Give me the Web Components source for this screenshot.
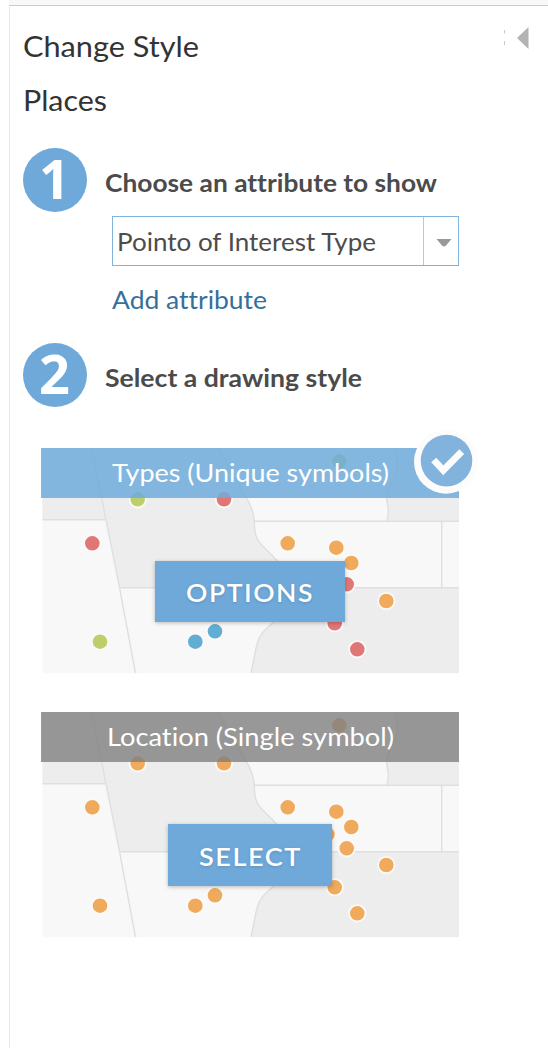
<!DOCTYPE html>
<html lang="en">
<head>
<meta charset="utf-8">
<title>Change Style</title>
<style>
html,body{margin:0;height:100%;background:#fff}
body{font-family:Lato,"Open Sans",sans-serif;color:#4c4c4c;overflow:hidden}
</style>
</head>
<body>
<style-panel></style-panel>
<script>
const define = (name, html, ready) => customElements.define(name, class extends HTMLElement {
  connectedCallback() {
    if (this.shadowRoot) return;
    const t = document.createElement('template');
    t.innerHTML = typeof html === 'function' ? html(this) : html;
    this.attachShadow({mode: 'open'}).append(t.content.cloneNode(true));
    if (ready) ready(this);
  }
});

// A single line of text set to a given measure by widening its letters.
define('fitted-text', `<style>
  :host{display:block;white-space:nowrap;font-variant-ligatures:none}
  span{display:inline-block;transform-origin:0 50%}
</style><span><slot></slot></span>`, el => {
  const span = el.shadowRoot.querySelector('span');
  const target = +el.getAttribute('measure');
  span.style.transform = `scaleX(${target / span.getBoundingClientRect().width})`;
  el.style.width = target + 'px';
});

define('step-heading', el => `<style>
  :host{display:flex;height:64px;align-items:center;gap:18px;font-size:25px;line-height:30px;font-weight:700;color:#4b4b4b}
  i{flex:none;width:64px;height:64px;border-radius:50%;background:#6fa9da;color:#fff;font:700 54px/61px "Open Sans",sans-serif;text-align:center;text-indent:-1px}
  fitted-text{padding-top:${el.getAttribute('drop') || 3}px}
</style><i>${el.getAttribute('number')}</i><fitted-text measure="${el.getAttribute('measure')}">${el.getAttribute('label')}</fitted-text>`);

define('attribute-select', `<style>
  :host{display:flex;box-sizing:border-box;width:347px;height:50px;border:1px solid #82b3dc;font-size:25px;line-height:49px}
  .value{flex:1;padding-left:4px}
  .arrow{width:34px;border-left:1px solid #c4c4c4;display:grid;place-items:center}
</style><div class="value"><slot></slot></div>
<div class="arrow"><svg width="16" height="10" viewBox="0 0 16 10" style="margin:4px 0 0 6px"><path d="M.5 1h15L10 7.5q-2 2-4 0z" fill="#999"/></svg></div>`);

const O = '#f0aa5b', R = '#e07775', G = '#bccf6a', B = '#62add3';
const points = [[96.7,51.3,G],[183,51.3,R],[51.3,95.3,R],[59,193.7,G],[154.3,193.7,B],[174,183.3,B],
  [298.3,13.3,G],[246.7,95.3,O],[295.3,99.7,O],[310.3,115,O],[286.4,122.3,O],[305.7,136.3,R],[345.3,153,O],[293.7,175.3,R],[316.3,201.3,R]];

define('map-thumb', el => `<style>:host{display:block}svg{display:block}</style>
<svg width="418" height="226" viewBox="0 0 418 226">
  <path d="M1.5 0H418V225.3H1.5z" fill="#f8f8f8"/>
  <g fill="#ededed">
    <path d="M1.5 0H50.7L65 72H1.5z"/>
    <path d="M50.7 0H178C185 15 197 35 205.7 50C211 59 213 67 213.5 74Q213 86 217 92C221 99 232 107 237 114Q248 126 251 139.7H78.5L65 72z"/>
    <path d="M353 0Q359 14 354 27L346 44C343 54 351 60 345.7 73H418V0z"/>
    <path d="M251 139.7H418V225H210C215 205 214 191 225 181C236 171 246 165 251 139.7z"/>
  </g>
  <g fill="none" stroke="#dfdfdf" stroke-width="1.4">
    <path d="M50.7 0L65 72L78.5 139.7L94.5 225M1.5 71.7H65M78.5 139.7H418"/>
    <path d="M178 0C185 15 197 35 205.7 50C211 59 213 67 213.5 74Q213 86 217 92C221 99 232 107 237 114Q248 126 251 139.7C246 165 236 171 225 181C214 191 215 205 210 225"/>
    <path d="M353 0Q359 14 354 27L346 44C343 54 351 60 345.7 73M213.5 73.3H418M400.7 73.3V139.7"/>
  </g>
  ${points.map(([x, y, c]) => `<circle cx="${x}" cy="${y}" r="8.2" fill="${el.hasAttribute('single') ? O : c}" stroke="#fafafa" stroke-width="1.8"/>`).join('')}
</svg>`);

define('style-card', `<style>
  :host{display:grid;position:relative;width:418px;height:226px;grid-template:226px/418px;--bar:rgba(111,172,218,.85)}
  :host([muted]){--bar:rgba(128,128,128,.8)}
  map-thumb,.over{grid-area:1/1}
  .over{position:relative;display:flex;flex-direction:column;align-items:center}
  .bar{width:418px;height:50px;background:var(--bar);color:#fff;font-size:25px;line-height:49px;display:flex;justify-content:center}
  .action{margin-top:63px;width:190px;height:61px;border:0;background:#6fa9da;color:#fff;font-size:25.5px;line-height:63px;font-weight:600;letter-spacing:1.5px;
    display:flex;justify-content:center;box-shadow:0 1px 4px rgba(0,0,0,.25);text-shadow:0 1px 3px rgba(0,0,0,.15)}
  :host([muted]) .action{margin-top:62px;width:164px;height:62px;line-height:64px}
  .badge{position:absolute;left:373px;top:-18px;display:none}
  :host([checked]) .badge{display:block}
</style>
<map-thumb></map-thumb>
<div class="over"><div class="bar"><slot name="title"></slot></div><div class="action"><slot name="action"></slot></div></div>
<svg class="badge" width="65" height="65" viewBox="0 0 65 65">
  <circle cx="32" cy="31.7" r="32" fill="#fcfcfc"/><circle cx="32.5" cy="30.6" r="25.8" fill="#82b3dc"/>
  <path d="M19.7 30l9.6 10.3L47.7 21.7" fill="none" stroke="#fcfcfc" stroke-width="6.8"/>
</svg>`, el => { if (el.hasAttribute('muted')) {
  const m = document.createElement('map-thumb'); m.setAttribute('single', '');
  el.shadowRoot.querySelector('map-thumb').replaceWith(m);
}});

define('style-panel', `<style>
  :host{display:flex;flex-direction:column;height:1048px;padding-left:9px;box-sizing:border-box}
  .strip{flex:none;height:5px;background:#f7f9f8;border-bottom:1px solid #c9c9c9}
  main{flex:1;margin-top:1px;border-left:1px solid #e9e9e9;padding:23px 0 0 13px;display:flex;flex-direction:column;align-items:flex-start}
  header{width:100%;display:flex;justify-content:space-between}
  .t{font-size:28px;line-height:32px;color:#333}
  .t2{margin:22px 0 32px}
  attribute-select{margin:4px 0 0 89px}
  .link{margin:18px 0 29px 89px;font-size:25px;line-height:30px;color:#35709a}
  style-card{margin-left:18px}
  .first{margin:41px 0 38px 18px}
</style>
<div class="strip"></div>
<main>
  <header><fitted-text class="t" measure="176">Change Style</fitted-text>
    <svg width="45" height="22" viewBox="0 0 45 22" style="margin-top:-3px"><path d="M14 11L25.5 0v22z" fill="#b3b3b3"/><path d="M1.5 3v3.5M1.5 14v4" stroke="#bbb" stroke-width=".8"/></svg></header>
  <fitted-text class="t t2" measure="84">Places</fitted-text>
  <step-heading number="1" label="Choose an attribute to show" measure="332"></step-heading>
  <attribute-select><fitted-text measure="259">Pointo of Interest Type</fitted-text></attribute-select>
  <fitted-text class="link" measure="155">Add attribute</fitted-text>
  <step-heading number="2" label="Select a drawing style" measure="257" drop="4"></step-heading>
  <style-card class="first" checked><fitted-text slot="title" measure="277">Types (Unique symbols)</fitted-text><fitted-text slot="action" measure="128">OPTIONS</fitted-text></style-card>
  <style-card muted><fitted-text slot="title" measure="287">Location (Single symbol)</fitted-text><fitted-text slot="action" measure="103">SELECT</fitted-text></style-card>
</main>`);
</script>
</body>
</html>
